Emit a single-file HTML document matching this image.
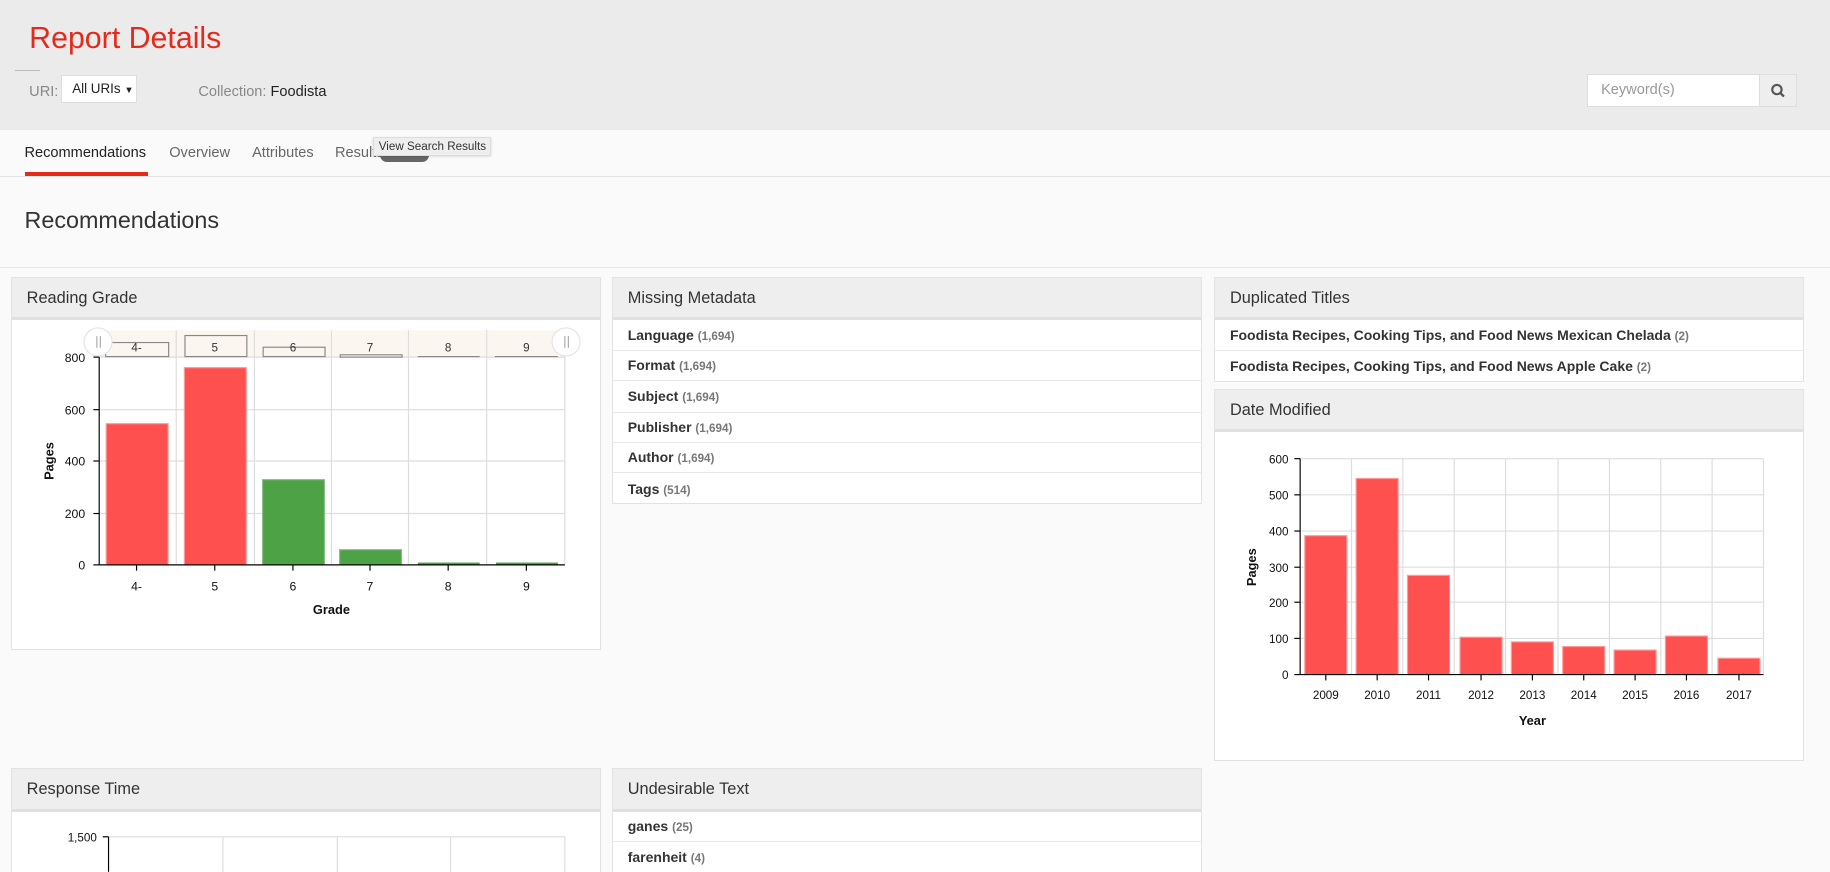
<!DOCTYPE html>
<html><head><meta charset="utf-8">
<style>
html,body{margin:0;padding:0;background:#fafafa;overflow:hidden;width:1830px;height:872px}
#w{position:relative;width:1568px;height:747px;zoom:1.16709;font-family:"Liberation Sans",sans-serif;color:#333}
.a{position:absolute}
.hdr{left:0;top:0;width:1568px;height:111px;background:#ebebeb}
.tabs{left:0;top:111px;width:1568px;height:40px;background:#fafafa;border-bottom:1px solid #e3e3e3}
.tab{top:124px;font-size:12.5px;color:#666}
.panel{background:#fff;border:1px solid #e2e2e2;box-sizing:border-box}
.ph{position:absolute;left:0;top:0;right:0;height:34px;background:#eee;border-bottom:3px solid #e0e0e0;font-size:14px;color:#333;line-height:35px;padding-left:13px}
.row{position:absolute;left:0;right:0;height:26px;border-bottom:1px solid #e8e8e8;font-size:12px;font-weight:bold;color:#333;line-height:27px;padding-left:13px}
.row span{font-size:10px;color:#777}
</style></head><body><div id="w">
<div class="a hdr"></div>
<div class="a" style="left:25px;top:19px;font-size:26px;color:#e52a1c">Report Details</div>
<div class="a" style="left:13px;top:60px;width:21px;height:1px;background:#bbb"></div>
<div class="a" style="left:25px;top:72px;font-size:12.5px;color:#888">URI:</div>
<div class="a" style="left:52px;top:64px;width:65px;height:24px;background:#fff;border:1px solid #ddd;box-sizing:border-box;font-size:11.5px;line-height:22px;padding-left:9px;color:#222">All URIs <span style="font-size:8px">▼</span></div>
<div class="a" style="left:170px;top:72px;font-size:12.5px;color:#888">Collection: <span style="color:#222">Foodista</span></div>
<div class="a" style="left:1360px;top:63px;width:148px;height:29px;background:#fff;border:1px solid #ddd;box-sizing:border-box;font-size:12.5px;color:#999;line-height:27px;padding-left:11px">Keyword(s)</div>
<div class="a" style="left:1507px;top:63px;width:33px;height:29px;background:#eee;border:1px solid #ddd;box-sizing:border-box"><svg width="31" height="27"><circle cx="14.5" cy="12.5" r="4" fill="none" stroke="#555" stroke-width="1.8"/><line x1="17.5" y1="15.5" x2="20.5" y2="18.5" stroke="#555" stroke-width="2"/></svg></div>
<div class="a tabs"></div>
<div class="a tab" style="left:21px;color:#222">Recommendations</div>
<div class="a tab" style="left:145px">Overview</div>
<div class="a tab" style="left:216px">Attributes</div>
<div class="a tab" style="left:287px">Results</div>
<div class="a" style="left:326px;top:127px;width:42px;height:12px;border-radius:6px;background:#666"></div>
<div class="a" style="left:320px;top:117px;width:101px;height:17px;background:#eee;border:1px solid #ddd;box-sizing:border-box;font-size:10px;color:#333;line-height:15px;text-align:center;box-shadow:0 1px 2px rgba(0,0,0,.15)">View Search Results</div>
<div class="a" style="left:21px;top:147px;width:106px;height:4px;background:#e52a1c"></div>
<div class="a" style="left:21px;top:177px;font-size:20px;color:#333">Recommendations</div>
<div class="a" style="left:0;top:229px;width:1568px;height:1px;background:#e6e6e6"></div>

<div class="a panel" style="left:9px;top:237px;width:506px;height:320px"><div class="ph">Reading Grade</div></div>
<div class="a panel" style="left:524px;top:237px;width:506px;height:195px"><div class="ph">Missing Metadata</div>
<div class="row" style="top:36px">Language <span>(1,694)</span></div>
<div class="row" style="top:62px">Format <span>(1,694)</span></div>
<div class="row" style="top:89px">Subject <span>(1,694)</span></div>
<div class="row" style="top:115px">Publisher <span>(1,694)</span></div>
<div class="row" style="top:141px">Author <span>(1,694)</span></div>
<div class="row" style="top:168px;border:none">Tags <span>(514)</span></div>
</div>
<div class="a panel" style="left:1040px;top:237px;width:506px;height:90px"><div class="ph">Duplicated Titles</div>
<div class="row" style="top:36px">Foodista Recipes, Cooking Tips, and Food News Mexican Chelada <span>(2)</span></div>
<div class="row" style="top:63px;border:none">Foodista Recipes, Cooking Tips, and Food News Apple Cake <span>(2)</span></div>
</div>
<div class="a panel" style="left:1040px;top:333px;width:506px;height:319px"><div class="ph">Date Modified</div></div>
<div class="a panel" style="left:9px;top:658px;width:506px;height:100px"><div class="ph">Response Time</div></div>
<div class="a panel" style="left:524px;top:658px;width:506px;height:100px"><div class="ph">Undesirable Text</div>
<div class="row" style="top:36px">ganes <span>(25)</span></div>
<div class="row" style="top:63px">farenheit <span>(4)</span></div>
</div>

<svg class="a" style="left:0;top:0" width="1568" height="747" font-family="Liberation Sans, sans-serif">
<rect x="85" y="283" width="399" height="23" fill="#fbf7f0"/>
<g stroke="#ddd" stroke-width="1">
<line x1="151" y1="283" x2="151" y2="484"/><line x1="218" y1="283" x2="218" y2="484"/><line x1="284" y1="283" x2="284" y2="484"/><line x1="350" y1="283" x2="350" y2="484"/><line x1="417" y1="283" x2="417" y2="484"/><line x1="484" y1="283" x2="484" y2="484"/>
<line x1="85" y1="306" x2="484" y2="306"/><line x1="85" y1="351" x2="484" y2="351"/><line x1="85" y1="395" x2="484" y2="395"/><line x1="85" y1="440" x2="484" y2="440"/>
</g>
<g fill="none" stroke="#888">
<rect x="90.5" y="293.5" width="54" height="12"/><rect x="158.5" y="287.5" width="53" height="18"/><rect x="225.5" y="297.5" width="53" height="8"/><rect x="291.5" y="304" width="53" height="2"/>
<line x1="358" y1="305.5" x2="411" y2="305.5"/><line x1="424" y1="305.5" x2="478" y2="305.5"/>
</g>
<g font-size="10" fill="#333" text-anchor="middle">
<text x="117" y="301">4-</text><text x="184" y="301">5</text><text x="251" y="301">6</text><text x="317" y="301">7</text><text x="384" y="301">8</text><text x="451" y="301">9</text>
</g>
<rect x="91" y="363" width="53" height="121" fill="#ff5050" stroke="#f99"/>
<rect x="158" y="315" width="53" height="169" fill="#ff5050" stroke="#f99"/>
<rect x="225" y="411" width="53" height="73" fill="#4ca244" stroke="#8b8"/>
<rect x="291" y="471" width="53" height="13" fill="#4ca244" stroke="#8b8"/>
<rect x="358" y="482" width="53" height="2" fill="#4ca244"/><rect x="425" y="482" width="53" height="2" fill="#4ca244"/>
<g stroke="#000"><line x1="85" y1="306" x2="85" y2="484"/><line x1="85" y1="484" x2="484" y2="484"/>
<line x1="80" y1="306" x2="85" y2="306"/><line x1="80" y1="351" x2="85" y2="351"/><line x1="80" y1="395" x2="85" y2="395"/><line x1="80" y1="440" x2="85" y2="440"/><line x1="80" y1="484" x2="85" y2="484"/>
<line x1="117" y1="484" x2="117" y2="489"/><line x1="184" y1="484" x2="184" y2="489"/><line x1="251" y1="484" x2="251" y2="489"/><line x1="317" y1="484" x2="317" y2="489"/><line x1="384" y1="484" x2="384" y2="489"/><line x1="451" y1="484" x2="451" y2="489"/></g>
<g font-size="10.5" fill="#111" text-anchor="end">
<text x="73" y="310">800</text><text x="73" y="355">600</text><text x="73" y="399">400</text><text x="73" y="444">200</text><text x="73" y="488">0</text></g>
<g font-size="10.5" fill="#111" text-anchor="middle">
<text x="117" y="506">4-</text><text x="184" y="506">5</text><text x="251" y="506">6</text><text x="317" y="506">7</text><text x="384" y="506">8</text><text x="451" y="506">9</text>
<text x="284" y="526" font-weight="bold" font-size="11">Grade</text>
<text transform="translate(46,395) rotate(-90)" font-weight="bold" font-size="11">Pages</text></g>
<g><circle cx="84" cy="293" r="12" fill="#fff" stroke="#e4e4e4"/><circle cx="485" cy="293" r="12" fill="#fff" stroke="#e4e4e4"/>
<g stroke="#aaa"><line x1="83" y1="288" x2="83" y2="298"/><line x1="86" y1="288" x2="86" y2="298"/><line x1="484" y1="288" x2="484" y2="298"/><line x1="487" y1="288" x2="487" y2="298"/></g></g>

<g stroke="#ddd">
<line x1="1114" y1="393" x2="1511" y2="393"/><line x1="1114" y1="424" x2="1511" y2="424"/><line x1="1114" y1="455" x2="1511" y2="455"/><line x1="1114" y1="486" x2="1511" y2="486"/><line x1="1114" y1="516" x2="1511" y2="516"/><line x1="1114" y1="547" x2="1511" y2="547"/>
<line x1="1158" y1="393" x2="1158" y2="578"/><line x1="1202" y1="393" x2="1202" y2="578"/><line x1="1246" y1="393" x2="1246" y2="578"/><line x1="1290" y1="393" x2="1290" y2="578"/><line x1="1335" y1="393" x2="1335" y2="578"/><line x1="1379" y1="393" x2="1379" y2="578"/><line x1="1423" y1="393" x2="1423" y2="578"/><line x1="1467" y1="393" x2="1467" y2="578"/><line x1="1511" y1="393" x2="1511" y2="578"/>
</g>
<g fill="#ff5050" stroke="#f99">
<rect x="1118" y="459" width="36" height="119"/><rect x="1162" y="410" width="36" height="168"/><rect x="1206" y="493" width="36" height="85"/><rect x="1251" y="546" width="36" height="32"/><rect x="1295" y="550" width="36" height="28"/><rect x="1339" y="554" width="36" height="24"/><rect x="1383" y="557" width="36" height="21"/><rect x="1427" y="545" width="36" height="33"/><rect x="1472" y="564" width="36" height="14"/>
</g>
<g stroke="#000"><line x1="1114" y1="393" x2="1114" y2="578"/><line x1="1114" y1="578" x2="1511" y2="578"/>
<line x1="1109" y1="393" x2="1114" y2="393"/><line x1="1109" y1="424" x2="1114" y2="424"/><line x1="1109" y1="455" x2="1114" y2="455"/><line x1="1109" y1="486" x2="1114" y2="486"/><line x1="1109" y1="516" x2="1114" y2="516"/><line x1="1109" y1="547" x2="1114" y2="547"/><line x1="1109" y1="578" x2="1114" y2="578"/>
<line x1="1136" y1="578" x2="1136" y2="583"/><line x1="1180" y1="578" x2="1180" y2="583"/><line x1="1224" y1="578" x2="1224" y2="583"/><line x1="1269" y1="578" x2="1269" y2="583"/><line x1="1313" y1="578" x2="1313" y2="583"/><line x1="1357" y1="578" x2="1357" y2="583"/><line x1="1401" y1="578" x2="1401" y2="583"/><line x1="1445" y1="578" x2="1445" y2="583"/><line x1="1490" y1="578" x2="1490" y2="583"/></g>
<g font-size="10" fill="#111" text-anchor="end">
<text x="1104" y="397">600</text><text x="1104" y="428">500</text><text x="1104" y="459">400</text><text x="1104" y="490">300</text><text x="1104" y="520">200</text><text x="1104" y="551">100</text><text x="1104" y="582">0</text></g>
<g font-size="10" fill="#111" text-anchor="middle">
<text x="1136" y="599">2009</text><text x="1180" y="599">2010</text><text x="1224" y="599">2011</text><text x="1269" y="599">2012</text><text x="1313" y="599">2013</text><text x="1357" y="599">2014</text><text x="1401" y="599">2015</text><text x="1445" y="599">2016</text><text x="1490" y="599">2017</text>
<text x="1313" y="621" font-weight="bold" font-size="11">Year</text>
<text transform="translate(1076,486) rotate(-90)" font-weight="bold" font-size="11">Pages</text></g>

<g stroke="#ddd"><line x1="93" y1="717" x2="484" y2="717"/><line x1="191" y1="717" x2="191" y2="747"/><line x1="289" y1="717" x2="289" y2="747"/><line x1="386" y1="717" x2="386" y2="747"/><line x1="484" y1="717" x2="484" y2="747"/></g>
<g stroke="#000"><line x1="93" y1="717" x2="93" y2="747"/><line x1="88" y1="717" x2="93" y2="717"/></g>
<text x="83" y="721" font-size="10" fill="#111" text-anchor="end">1,500</text>
</svg>
</div></body></html>
